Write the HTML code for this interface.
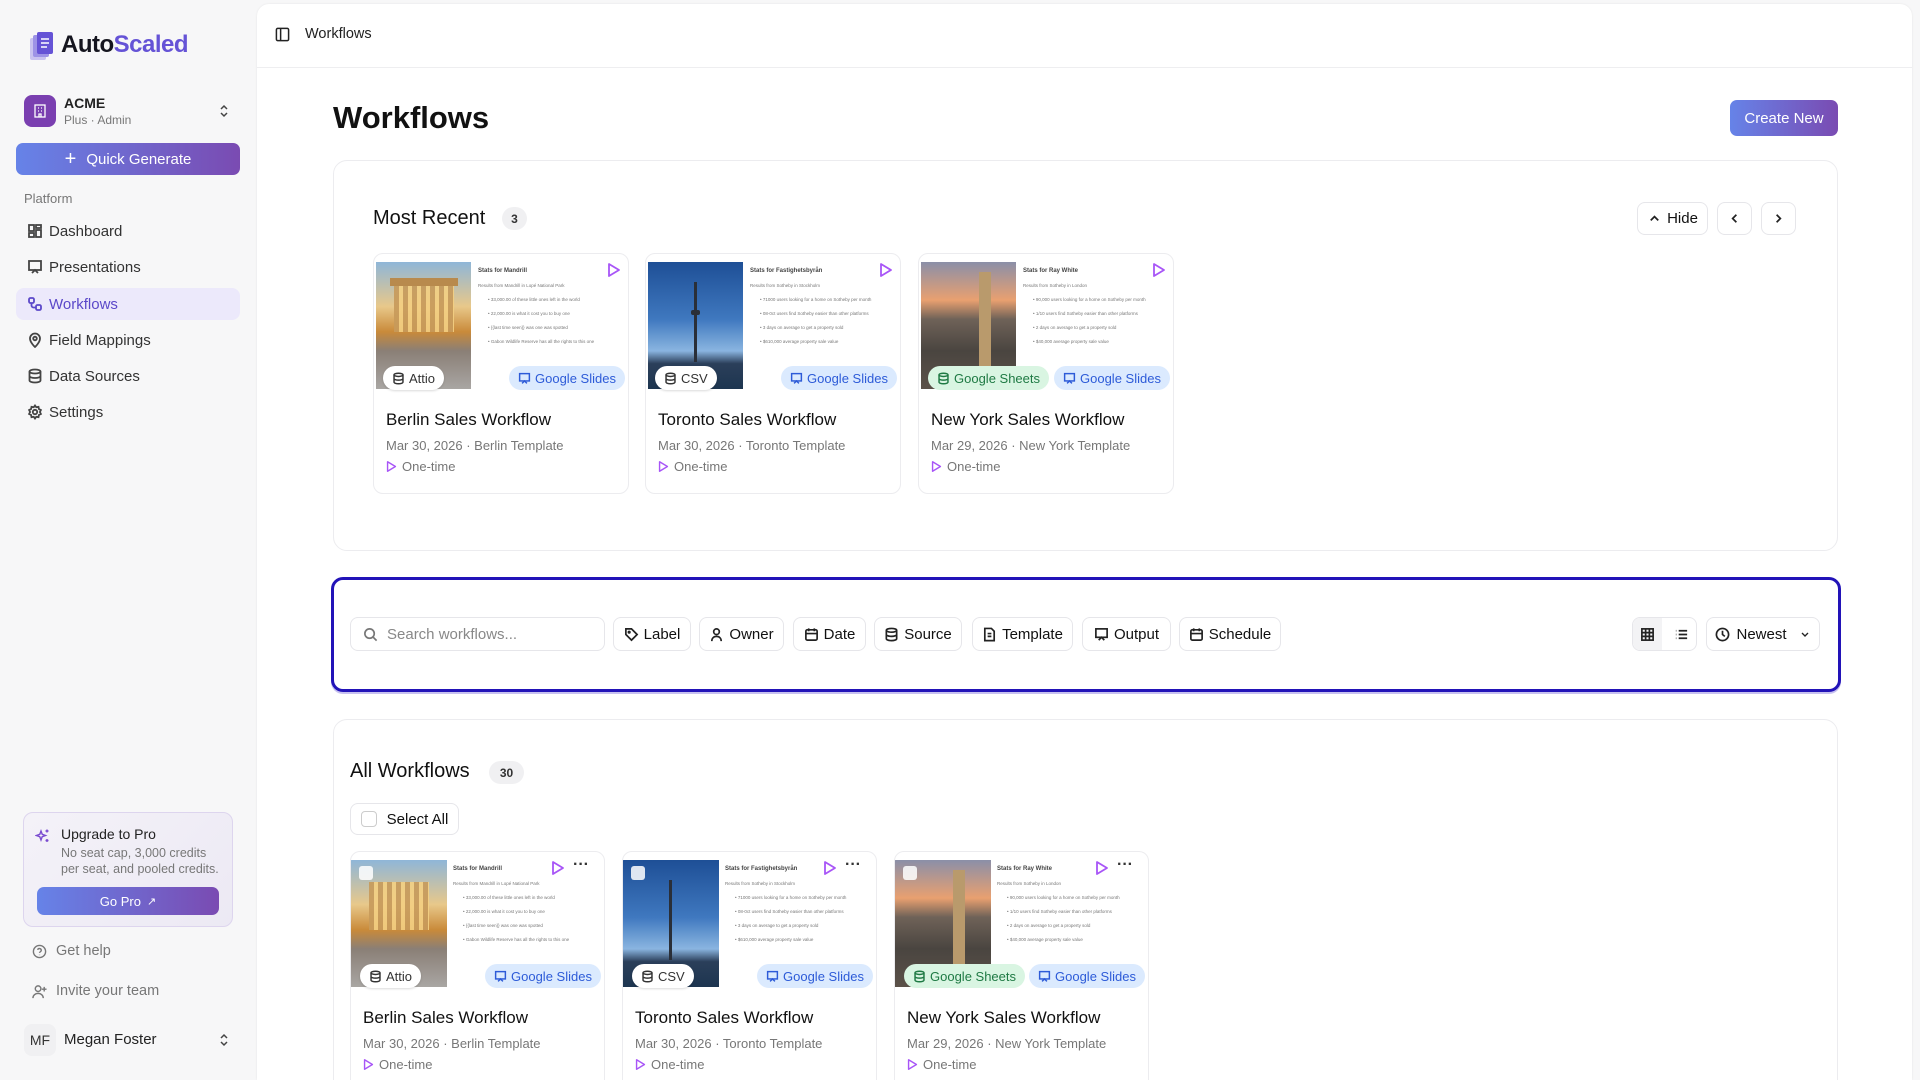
<!DOCTYPE html>
<html><head><meta charset="utf-8"><style>
*{box-sizing:border-box;margin:0;padding:0}
html,body{width:1920px;height:1080px;overflow:hidden}
body{background:#f7f7f8;font-family:"Liberation Sans",sans-serif;color:#111}
#root{position:relative;width:1920px;height:1080px;overflow:hidden}
.abs{position:absolute}
.nav{position:absolute;left:16px;width:224px;height:32px;border-radius:8px;display:flex;align-items:center;padding-left:11px;font-size:15px;color:#333;gap:6px}
.nav svg{width:16px;height:16px;stroke:#444;fill:none;stroke-width:1.8}
.main{position:absolute;left:257px;top:4px;width:1655px;height:1076px;background:#fff;border-radius:12px 12px 0 0;box-shadow:0 0 2px rgba(0,0,0,.08)}
.panel{position:absolute;background:#fff;border:1px solid #ececef;border-radius:14px}
.btn{position:absolute;border:1px solid #e6e6ea;border-radius:8px;background:#fff;display:flex;align-items:center;justify-content:center;font-size:15px;gap:5px;color:#111}
.btn svg{width:15px;height:15px;stroke:#222;fill:none;stroke-width:1.8}
.badge{display:inline-flex;align-items:center;justify-content:center;background:#f0f0f2;border-radius:12px;font-size:12px;font-weight:bold;color:#333}
.card{position:absolute;width:256px;height:241px;border:1px solid #ececef;border-radius:10px;background:#fff;overflow:hidden}
.img{position:absolute;left:2px;top:8px;width:95px;height:127px}
.slide{position:absolute;left:100px;top:8px;width:150px;height:127px;font-size:4.5px;color:#777;padding:6px 4px}
.slide b{color:#444;font-size:6px;display:block;margin-bottom:9px}
.slide i{font-style:normal;display:block;margin:0 0 9px 10px}
.play{position:absolute;width:14px;height:16px}
.tag{position:absolute;top:112px;height:24px;border-radius:12px;display:flex;align-items:center;gap:4px;font-size:13px;padding:0 9px}
.tag svg{width:13px;height:13px;fill:none;stroke-width:1.8}
.t-src{background:#fff;color:#333;box-shadow:0 1px 2px rgba(0,0,0,.15)}
.t-src svg{stroke:#333}
.t-gs{background:#dbeafe;color:#2d5bd8}.t-gs svg{stroke:#2d5bd8}
.t-sh{background:#d9f5e2;color:#1f7a44}.t-sh svg{stroke:#1f7a44}
.ct{position:absolute;left:12px;top:156px;font-size:17px;color:#111}
.cd{position:absolute;left:12px;top:184px;font-size:13px;color:#777}
.co{position:absolute;left:12px;top:205px;font-size:13px;color:#777;display:flex;align-items:center;gap:5px}
</style></head><body><div id="root">

<svg class="abs" style="left:28px;top:30px" width="28" height="32" viewBox="0 0 28 32"><rect x="2" y="8" width="16" height="22" rx="2" fill="#c9c3f0"/><rect x="5" y="5" width="16" height="22" rx="2" fill="#9d93e6"/><rect x="9" y="2" width="16" height="22" rx="2" fill="#6553d6"/><path d="M13 9h8M13 13h8M13 17h6" stroke="#fff" stroke-width="1.4"/></svg>
<div class="abs" style="left:61px;top:31px;font-size:24px;font-weight:bold;letter-spacing:-.5px"><span style="color:#15151f">Auto</span><span style="color:#6553d6">Scaled</span></div>

<div class="abs" style="left:24px;top:95px;width:32px;height:32px;border-radius:8px;background:#7a3fb0;display:flex;align-items:center;justify-content:center"><svg width="16" height="16" viewBox="0 0 16 16" fill="none" stroke="#fff" stroke-width="1.3"><rect x="3" y="2" width="10" height="12"/><path d="M6 5h1M9 5h1M6 8h1M9 8h1M7 14v-3h2v3"/></svg></div>
<div class="abs" style="left:64px;top:95px;font-size:14px;font-weight:bold;color:#222">ACME</div>
<div class="abs" style="left:64px;top:113px;font-size:12px;color:#777">Plus · Admin</div>
<svg class="abs" style="left:217px;top:103px" width="14" height="16" viewBox="0 0 14 16" fill="none" stroke="#444" stroke-width="1.5"><path d="M4 6l3-3 3 3M4 10l3 3 3-3"/></svg>

<div class="abs" style="left:16px;top:143px;width:224px;height:32px;border-radius:7px;background:linear-gradient(90deg,#6683e8,#7a4bb2);color:#fff;font-size:15px;display:flex;align-items:center;justify-content:center;gap:10px"><span style="font-size:20px;font-weight:300">+</span>Quick Generate</div>

<div class="abs" style="left:24px;top:191px;font-size:13px;color:#777">Platform</div>
<div class="nav" style="top:215px"><svg viewBox="0 0 16 16"><rect x="2" y="2" width="5" height="6"/><rect x="9" y="2" width="5" height="3"/><rect x="2" y="10" width="5" height="4"/><rect x="9" y="7" width="5" height="7"/></svg>Dashboard</div>
<div class="nav" style="top:251px"><svg viewBox="0 0 16 16"><rect x="2" y="2" width="12" height="9"/><path d="M5 14l3-3 3 3"/></svg>Presentations</div>
<div class="nav" style="top:288px;background:#ece9fb;color:#5b48c9"><svg viewBox="0 0 16 16" style="stroke:#5b48c9"><rect x="2" y="2" width="5" height="5" rx="1.5"/><rect x="9" y="9" width="5" height="5" rx="1.5"/><path d="M4.5 7v2.5a2 2 0 002 2H9"/></svg>Workflows</div>
<div class="nav" style="top:324px"><svg viewBox="0 0 16 16"><path d="M8 15s5-4.5 5-8.5A5 5 0 003 6.5C3 10.5 8 15 8 15z"/><circle cx="8" cy="6.5" r="1.8"/></svg>Field Mappings</div>
<div class="nav" style="top:360px"><svg viewBox="0 0 16 16"><ellipse cx="8" cy="3.5" rx="5.5" ry="2"/><path d="M2.5 3.5v9c0 1.1 2.5 2 5.5 2s5.5-.9 5.5-2v-9M2.5 8c0 1.1 2.5 2 5.5 2s5.5-.9 5.5-2"/></svg>Data Sources</div>
<div class="nav" style="top:396px"><svg viewBox="0 0 16 16"><circle cx="8" cy="8" r="2.2"/><path d="M8 1.5l1.3 1.8 2.2-.5.4 2.2 2 1-1 2 1 2-2 1-.4 2.2-2.2-.5L8 14.5l-1.3-1.8-2.2.5-.4-2.2-2-1 1-2-1-2 2-1 .4-2.2 2.2.5z"/></svg>Settings</div>

<div class="abs" style="left:23px;top:812px;width:210px;height:115px;border:1px solid #ddd5ee;border-radius:10px;background:linear-gradient(135deg,#f4f2f8,#ece9f4)">
<svg class="abs" style="left:11px;top:15px" width="16" height="16" viewBox="0 0 16 16" fill="none" stroke="#7a4bd0" stroke-width="1.4"><path d="M6 3l1.2 3.3L10.5 7.5 7.2 8.7 6 12 4.8 8.7 1.5 7.5 4.8 6.3z M12 1.5v3M10.5 3h3M12 11v3M10.5 12.5h3"/></svg>
<div class="abs" style="left:37px;top:13px;font-size:14px;color:#222">Upgrade to Pro</div>
<div class="abs" style="left:37px;top:32px;font-size:12.5px;color:#777;line-height:16px">No seat cap, 3,000 credits<br>per seat, and pooled credits.</div>
<div class="abs" style="left:13px;top:74px;width:182px;height:28px;border-radius:7px;background:linear-gradient(90deg,#6683e8,#7a4bb2);color:#fff;font-size:13px;display:flex;align-items:center;justify-content:center;gap:6px">Go Pro <span style="font-size:11px">↗</span></div>
</div>
<div class="abs" style="left:32px;top:943px;font-size:14.5px;color:#777;display:flex;gap:9px;align-items:center"><svg width="15" height="15" viewBox="0 0 16 16" fill="none" stroke="#777" stroke-width="1.5"><circle cx="8" cy="8" r="6.5"/><path d="M6 6.2a2 2 0 013.9.6c0 1.3-1.9 1.6-1.9 2.7M8 11.5v.3"/></svg>Get help</div>
<div class="abs" style="left:32px;top:983px;font-size:14.5px;color:#777;display:flex;gap:9px;align-items:center"><svg width="15" height="15" viewBox="0 0 16 16" fill="none" stroke="#777" stroke-width="1.5"><circle cx="6.5" cy="5" r="3"/><path d="M1 15c0-3 2.5-5 5.5-5s5.5 2 5.5 5M13 3v5M10.5 5.5h5"/></svg>Invite your team</div>
<div class="abs" style="left:24px;top:1024px;width:32px;height:32px;border-radius:8px;background:#f0f0f2;font-size:14px;color:#333;display:flex;align-items:center;justify-content:center">MF</div>
<div class="abs" style="left:64px;top:1031px;font-size:15px;color:#222">Megan Foster</div>
<svg class="abs" style="left:217px;top:1032px" width="14" height="16" viewBox="0 0 14 16" fill="none" stroke="#444" stroke-width="1.5"><path d="M4 6l3-3 3 3M4 10l3 3 3-3"/></svg>

<div class="main">
<div class="abs" style="left:0;top:63px;width:1655px;height:1px;background:#eeeef0"></div>
<svg class="abs" style="left:18px;top:23px" width="15" height="15" viewBox="0 0 16 16" fill="none" stroke="#222" stroke-width="1.6"><rect x="1.5" y="1.5" width="13" height="13" rx="1.5"/><path d="M6 1.5v13"/></svg>
<div class="abs" style="left:48px;top:22px;font-size:14.5px;color:#222">Workflows</div>
<div class="abs" style="left:76px;top:96px;font-size:31px;font-weight:600;color:#111">Workflows</div>
<div class="abs" style="left:1473px;top:96px;width:108px;height:36px;border-radius:7px;background:linear-gradient(90deg,#6683e8,#7a4bb2);color:#fff;font-size:15px;display:flex;align-items:center;justify-content:center">Create New</div>
</div>

<div class="panel" style="left:333px;top:160px;width:1505px;height:391px"></div>
<div class="abs" style="left:373px;top:207px;font-size:20px">Most Recent</div>
<div class="abs badge" style="left:502px;top:207px;width:25px;height:23px">3</div>
<div class="btn" style="left:1637px;top:202px;width:71px;height:33px"><svg viewBox="0 0 16 16"><path d="M4 10l4-4 4 4"/></svg>Hide</div>
<div class="btn" style="left:1717px;top:202px;width:35px;height:33px"><svg viewBox="0 0 16 16"><path d="M10 4l-4 4 4 4"/></svg></div>
<div class="btn" style="left:1761px;top:202px;width:35px;height:33px"><svg viewBox="0 0 16 16"><path d="M6 4l4 4-4 4"/></svg></div>

<div class="abs" style="left:331px;top:577px;width:1510px;height:115px;border:3px solid #2213b8;border-radius:12px;background:#fff;box-shadow:0 2px 0 #c7c1f0"></div>
<div class="btn" style="left:350px;top:617px;width:255px;height:34px;justify-content:flex-start;padding-left:12px;color:#888;gap:9px"><svg viewBox="0 0 16 16" style="stroke:#777"><circle cx="7" cy="7" r="5"/><path d="M11 11l3.5 3.5"/></svg>Search workflows...</div>
<div class="btn" style="left:613px;top:617px;width:78px;height:34px"><svg viewBox="0 0 16 16"><path d="M2 2h6l6 6-6 6-6-6z"/><circle cx="5.5" cy="5.5" r=".8"/></svg>Label</div>
<div class="btn" style="left:699px;top:617px;width:85px;height:34px"><svg viewBox="0 0 16 16"><circle cx="8" cy="5" r="3"/><path d="M3 15c0-3 2-5 5-5s5 2 5 5"/></svg>Owner</div>
<div class="btn" style="left:793px;top:617px;width:73px;height:34px"><svg viewBox="0 0 16 16"><rect x="2" y="3" width="12" height="11" rx="1.5"/><path d="M2 7h12M5 1.5v3M11 1.5v3"/></svg>Date</div>
<div class="btn" style="left:874px;top:617px;width:88px;height:34px"><svg viewBox="0 0 16 16"><ellipse cx="8" cy="3.5" rx="5.5" ry="2"/><path d="M2.5 3.5v9c0 1.1 2.5 2 5.5 2s5.5-.9 5.5-2v-9M2.5 8c0 1.1 2.5 2 5.5 2s5.5-.9 5.5-2"/></svg>Source</div>
<div class="btn" style="left:972px;top:617px;width:101px;height:34px"><svg viewBox="0 0 16 16"><path d="M3 1.5h7l3 3v10H3z M6 7h4M6 10h4"/></svg>Template</div>
<div class="btn" style="left:1082px;top:617px;width:89px;height:34px"><svg viewBox="0 0 16 16"><rect x="2" y="2" width="12" height="9"/><path d="M5 14l3-3 3 3"/></svg>Output</div>
<div class="btn" style="left:1179px;top:617px;width:102px;height:34px"><svg viewBox="0 0 16 16"><rect x="2" y="3" width="12" height="11" rx="1.5"/><path d="M2 7h12M5 1.5v3M11 1.5v3"/></svg>Schedule</div>
<div class="btn" style="left:1632px;top:617px;width:65px;height:34px;padding:0;justify-content:flex-start;overflow:hidden"><div style="width:32px;height:34px;background:#f3f3f5;display:flex;align-items:center;justify-content:center"><svg viewBox="0 0 16 16"><rect x="2" y="2" width="12" height="12"/><path d="M2 6h12M2 10h12M6 2v12M10 2v12"/></svg></div><div style="width:32px;display:flex;justify-content:center"><svg viewBox="0 0 16 16"><path d="M5 4h9M5 8h9M5 12h9M2 4h.5M2 8h.5M2 12h.5"/></svg></div></div>
<div class="btn" style="left:1706px;top:617px;width:114px;height:34px;gap:6px"><svg viewBox="0 0 16 16"><circle cx="8" cy="8" r="6.5"/><path d="M8 4v4l2.5 2"/></svg>Newest<svg viewBox="0 0 16 16" style="margin-left:6px;width:12px"><path d="M4 6l4 4 4-4"/></svg></div>

<div class="panel" style="left:333px;top:719px;width:1505px;height:380px"></div>
<div class="abs" style="left:350px;top:760px;font-size:20px">All Workflows</div>
<div class="abs badge" style="left:489px;top:761px;width:35px;height:23px">30</div>
<div class="btn" style="left:350px;top:803px;width:109px;height:32px;gap:10px"><span style="width:16px;height:16px;border:1px solid #ccc;border-radius:4px"></span>Select All</div>

<svg width="0" height="0" style="position:absolute"><defs>
<symbol id="pl" viewBox="0 0 14 16"><path d="M2 2l10 6-10 6z" fill="none" stroke="#a855f7" stroke-width="1.8" stroke-linejoin="round"/></symbol>
<symbol id="db" viewBox="0 0 16 16"><ellipse cx="8" cy="3.5" rx="5.5" ry="2"/><path d="M2.5 3.5v9c0 1.1 2.5 2 5.5 2s5.5-.9 5.5-2v-9M2.5 8c0 1.1 2.5 2 5.5 2s5.5-.9 5.5-2"/></symbol>
<symbol id="pr" viewBox="0 0 16 16"><rect x="2" y="2" width="12" height="9"/><path d="M5 14l3-3 3 3"/></symbol>
</defs></svg>

<div class="card" style="left:373px;top:253px">
<div class="img" style="background:linear-gradient(180deg,#8fb6d8 0%,#e8c88a 35%,#c98a3a 55%,#8a7f76 70%,#a9a6a3 100%)"><div style="position:absolute;left:18px;top:22px;width:60px;height:48px;background:repeating-linear-gradient(90deg,#c79a5a 0 5px,#f3cf82 5px 9px);opacity:.9"></div><div style="position:absolute;left:14px;top:16px;width:68px;height:8px;background:#b88a4d"></div></div>
<div class="slide"><b>Stats for Mandrill</b><span style="display:block;margin-bottom:9px">Results from Mandrill in Lopé National Park</span><i>• 33,000.00 of these little ones left in the world</i><i>• 22,000.00 is what it cost you to buy one</i><i>• {{last time seen}} was one was spotted</i><i>• Gabon Wildlife Reserve has all the rights to this one</i></div>
<svg class="play" style="left:233px;top:8px"><use href="#pl"/></svg>
<div class="tag t-src" style="left:9px"><svg><use href="#db"/></svg>Attio</div>
<div class="tag t-gs" style="left:135px"><svg><use href="#pr"/></svg>Google Slides</div>
<div class="ct">Berlin Sales Workflow</div><div class="cd">Mar 30, 2026 · Berlin Template</div>
<div class="co"><svg width="11" height="13"><use href="#pl"/></svg>One-time</div>
</div>

<div class="card" style="left:645px;top:253px">
<div class="img" style="background:linear-gradient(180deg,#1e4f96 0%,#3f78bf 45%,#8ab5e0 70%,#2b3f5a 80%,#1d3550 100%)"><div style="position:absolute;left:46px;top:20px;width:3px;height:80px;background:#2a2f38"></div><div style="position:absolute;left:43px;top:48px;width:9px;height:5px;background:#2a2f38;border-radius:2px"></div></div>
<div class="slide"><b>Stats for Fastighetsbyrån</b><span style="display:block;margin-bottom:9px">Results from Sotheby in Stockholm</span><i>• 71000 users looking for a home on Sotheby per month</i><i>• 08-0ct users find Sotheby easier than other platforms</i><i>• 3 days on average to get a property sold</i><i>• $610,000 average property sale value</i></div>
<svg class="play" style="left:233px;top:8px"><use href="#pl"/></svg>
<div class="tag t-src" style="left:9px"><svg><use href="#db"/></svg>CSV</div>
<div class="tag t-gs" style="left:135px"><svg><use href="#pr"/></svg>Google Slides</div>
<div class="ct">Toronto Sales Workflow</div><div class="cd">Mar 30, 2026 · Toronto Template</div>
<div class="co"><svg width="11" height="13"><use href="#pl"/></svg>One-time</div>
</div>

<div class="card" style="left:918px;top:253px">
<div class="img" style="background:linear-gradient(180deg,#8b8fa8 0%,#e9a070 30%,#6f6258 45%,#4a4540 70%,#5b5148 100%)"><div style="position:absolute;left:58px;top:10px;width:12px;height:100px;background:#b99a6c"></div></div>
<div class="slide"><b>Stats for Ray White</b><span style="display:block;margin-bottom:9px">Results from Sotheby in London</span><i>• 90,000 users looking for a home on Sotheby per month</i><i>• 1/10 users find Sotheby easier than other platforms</i><i>• 2 days on average to get a property sold</i><i>• $40,000 average property sale value</i></div>
<svg class="play" style="left:233px;top:8px"><use href="#pl"/></svg>
<div class="tag t-sh" style="left:9px"><svg><use href="#db"/></svg>Google Sheets</div>
<div class="tag t-gs" style="left:135px"><svg><use href="#pr"/></svg>Google Slides</div>
<div class="ct">New York Sales Workflow</div><div class="cd">Mar 29, 2026 · New York Template</div>
<div class="co"><svg width="11" height="13"><use href="#pl"/></svg>One-time</div>
</div>

<div class="card" style="left:350px;top:851px;width:255px;height:260px">
<div class="img" style="left:0;width:96px;background:linear-gradient(180deg,#8fb6d8 0%,#e8c88a 35%,#c98a3a 55%,#8a7f76 70%,#a9a6a3 100%)"><div style="position:absolute;left:18px;top:22px;width:60px;height:48px;background:repeating-linear-gradient(90deg,#c79a5a 0 5px,#f3cf82 5px 9px);opacity:.9"></div><div style="position:absolute;left:8px;top:6px;width:14px;height:14px;border-radius:3px;background:rgba(255,255,255,.85)"></div></div>
<div class="slide" style="left:98px"><b>Stats for Mandrill</b><span style="display:block;margin-bottom:9px">Results from Mandrill in Lopé National Park</span><i>• 33,000.00 of these little ones left in the world</i><i>• 22,000.00 is what it cost you to buy one</i><i>• {{last time seen}} was one was spotted</i><i>• Gabon Wildlife Reserve has all the rights to this one</i></div>
<svg class="play" style="left:200px;top:8px"><use href="#pl"/></svg><div class="abs" style="left:222px;top:4px;font-size:16px;font-weight:bold;color:#333">···</div>
<div class="tag t-src" style="left:9px"><svg><use href="#db"/></svg>Attio</div>
<div class="tag t-gs" style="left:134px"><svg><use href="#pr"/></svg>Google Slides</div>
<div class="ct">Berlin Sales Workflow</div><div class="cd">Mar 30, 2026 · Berlin Template</div>
<div class="co"><svg width="11" height="13"><use href="#pl"/></svg>One-time</div>
</div>

<div class="card" style="left:622px;top:851px;width:255px;height:260px">
<div class="img" style="left:0;width:96px;background:linear-gradient(180deg,#1e4f96 0%,#3f78bf 45%,#8ab5e0 70%,#2b3f5a 80%,#1d3550 100%)"><div style="position:absolute;left:46px;top:20px;width:3px;height:80px;background:#2a2f38"></div><div style="position:absolute;left:8px;top:6px;width:14px;height:14px;border-radius:3px;background:rgba(255,255,255,.85)"></div></div>
<div class="slide" style="left:98px"><b>Stats for Fastighetsbyrån</b><span style="display:block;margin-bottom:9px">Results from Sotheby in Stockholm</span><i>• 71000 users looking for a home on Sotheby per month</i><i>• 08-0ct users find Sotheby easier than other platforms</i><i>• 3 days on average to get a property sold</i><i>• $610,000 average property sale value</i></div>
<svg class="play" style="left:200px;top:8px"><use href="#pl"/></svg><div class="abs" style="left:222px;top:4px;font-size:16px;font-weight:bold;color:#333">···</div>
<div class="tag t-src" style="left:9px"><svg><use href="#db"/></svg>CSV</div>
<div class="tag t-gs" style="left:134px"><svg><use href="#pr"/></svg>Google Slides</div>
<div class="ct">Toronto Sales Workflow</div><div class="cd">Mar 30, 2026 · Toronto Template</div>
<div class="co"><svg width="11" height="13"><use href="#pl"/></svg>One-time</div>
</div>

<div class="card" style="left:894px;top:851px;width:255px;height:260px">
<div class="img" style="left:0;width:96px;background:linear-gradient(180deg,#8b8fa8 0%,#e9a070 30%,#6f6258 45%,#4a4540 70%,#5b5148 100%)"><div style="position:absolute;left:58px;top:10px;width:12px;height:100px;background:#b99a6c"></div><div style="position:absolute;left:8px;top:6px;width:14px;height:14px;border-radius:3px;background:rgba(255,255,255,.85)"></div></div>
<div class="slide" style="left:98px"><b>Stats for Ray White</b><span style="display:block;margin-bottom:9px">Results from Sotheby in London</span><i>• 90,000 users looking for a home on Sotheby per month</i><i>• 1/10 users find Sotheby easier than other platforms</i><i>• 2 days on average to get a property sold</i><i>• $40,000 average property sale value</i></div>
<svg class="play" style="left:200px;top:8px"><use href="#pl"/></svg><div class="abs" style="left:222px;top:4px;font-size:16px;font-weight:bold;color:#333">···</div>
<div class="tag t-sh" style="left:9px"><svg><use href="#db"/></svg>Google Sheets</div>
<div class="tag t-gs" style="left:134px"><svg><use href="#pr"/></svg>Google Slides</div>
<div class="ct">New York Sales Workflow</div><div class="cd">Mar 29, 2026 · New York Template</div>
<div class="co"><svg width="11" height="13"><use href="#pl"/></svg>One-time</div>
</div>

</div></body></html>
